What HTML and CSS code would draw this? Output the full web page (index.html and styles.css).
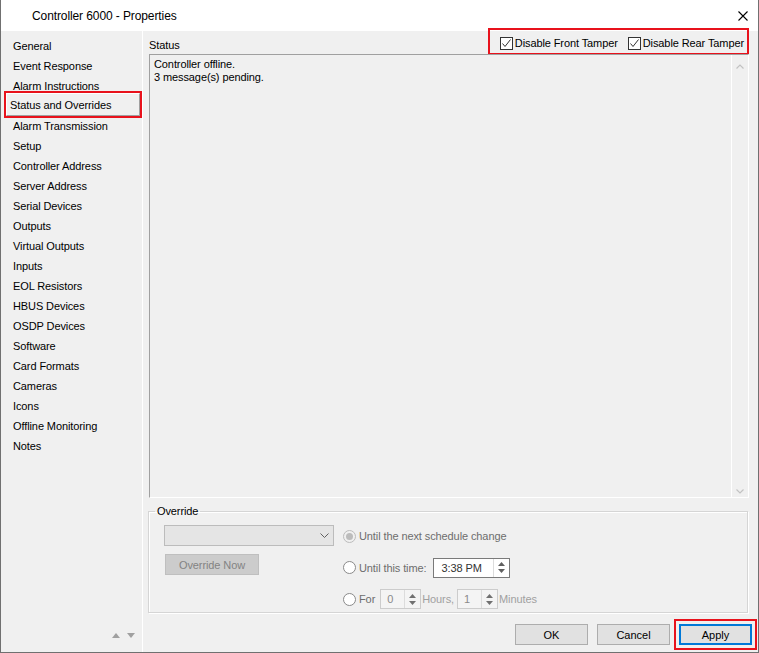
FILE: index.html
```html
<!DOCTYPE html>
<html lang="en">
<head>
    <meta charset="UTF-8">
    <meta name="viewport" content="width=device-width, initial-scale=1.0">
    <title>Controller 6000 - Properties</title>
    <link rel="stylesheet" href="styles.css">
</head>
<body>
    <div class="window">
        <div class="titlebar">
            <span class="title">Controller 6000 - Properties</span>
            <svg class="close" width="10" height="10" viewBox="0 0 10 10">
                <path d="M0.5 0.5L9.5 9.5M9.5 0.5L0.5 9.5" stroke="#000" stroke-width="1.1" fill="none"/>
            </svg>
        </div>
        <div class="content">
            <div class="nav">
                <ul class="nav-list">
                    <li>General</li>
                    <li>Event Response</li>
                    <li>Alarm Instructions</li>
                    <li class="active">Status and Overrides</li>
                    <li>Alarm Transmission</li>
                    <li>Setup</li>
                    <li>Controller Address</li>
                    <li>Server Address</li>
                    <li>Serial Devices</li>
                    <li>Outputs</li>
                    <li>Virtual Outputs</li>
                    <li>Inputs</li>
                    <li>EOL Resistors</li>
                    <li>HBUS Devices</li>
                    <li>OSDP Devices</li>
                    <li>Software</li>
                    <li>Card Formats</li>
                    <li>Cameras</li>
                    <li>Icons</li>
                    <li>Offline Monitoring</li>
                    <li>Notes</li>
                </ul>
                <div class="nav-arrows">
                    <span class="tri-up"></span>
                    <span class="tri-down"></span>
                </div>
            </div>
            <div class="main">
                <div class="status-head">
                    <span class="status-label">Status</span>
                    <div class="tampers">
                        <label class="check">
                            <span class="box"><svg width="11" height="11" viewBox="0 0 11 11"><path d="M1.5 5.5L4 8.5L9.5 1.5" stroke="#333" stroke-width="1" fill="none"/></svg></span>
                            Disable Front Tamper
                        </label>
                        <label class="check">
                            <span class="box"><svg width="11" height="11" viewBox="0 0 11 11"><path d="M1.5 5.5L4 8.5L9.5 1.5" stroke="#333" stroke-width="1" fill="none"/></svg></span>
                            Disable Rear Tamper
                        </label>
                    </div>
                </div>
                <div class="status-box">
                    <div class="status-text">Controller offline.<br>3 message(s) pending.</div>
                    <div class="vscroll">
                        <svg width="8" height="5" viewBox="0 0 8 5"><path d="M0.5 4.5L4 1L7.5 4.5" stroke="#c2c2c2" stroke-width="1.2" fill="none"/></svg>
                        <svg width="8" height="5" viewBox="0 0 8 5"><path d="M0.5 0.5L4 4L7.5 0.5" stroke="#c2c2c2" stroke-width="1.2" fill="none"/></svg>
                    </div>
                </div>
                <fieldset class="override">
                    <legend>Override</legend>
                    <div class="override-body">
                        <div class="override-left">
                            <div class="combo">
                                <svg width="9" height="5" viewBox="0 0 9 5"><path d="M0.5 0.5L4.5 4.5L8.5 0.5" stroke="#606060" stroke-width="1" fill="none"/></svg>
                            </div>
                            <div class="btn-disabled">Override Now</div>
                        </div>
                        <div class="override-right">
                            <div class="opt">
                                <span class="radio radio-on"></span>
                                <span class="opt-label">Until the next schedule change</span>
                            </div>
                            <div class="opt">
                                <span class="radio"></span>
                                <span class="opt-label">Until this time:</span>
                                <div class="spin time">
                                    <span class="val">3:38 PM</span>
                                    <span class="spin-btns">
                                        <svg width="7" height="4" viewBox="0 0 7 4"><path d="M0 4L3.5 0L7 4Z" fill="#606060"/></svg>
                                        <svg width="7" height="4" viewBox="0 0 7 4"><path d="M0 0L3.5 4L7 0Z" fill="#606060"/></svg>
                                    </span>
                                </div>
                            </div>
                            <div class="opt">
                                <span class="radio"></span>
                                <span class="opt-label">For</span>
                                <div class="spin small">
                                    <span class="val">0</span>
                                    <span class="spin-btns">
                                        <svg width="7" height="4" viewBox="0 0 7 4"><path d="M0 4L3.5 0L7 4Z" fill="#707070"/></svg>
                                        <svg width="7" height="4" viewBox="0 0 7 4"><path d="M0 0L3.5 4L7 0Z" fill="#707070"/></svg>
                                    </span>
                                </div>
                                <span class="unit">Hours,</span>
                                <div class="spin small">
                                    <span class="val">1</span>
                                    <span class="spin-btns">
                                        <svg width="7" height="4" viewBox="0 0 7 4"><path d="M0 4L3.5 0L7 4Z" fill="#707070"/></svg>
                                        <svg width="7" height="4" viewBox="0 0 7 4"><path d="M0 0L3.5 4L7 0Z" fill="#707070"/></svg>
                                    </span>
                                </div>
                                <span class="unit">Minutes</span>
                            </div>
                        </div>
                    </div>
                </fieldset>
                <div class="buttons">
                    <button>OK</button>
                    <button>Cancel</button>
                    <button class="default">Apply</button>
                </div>
            </div>
        </div>
    </div>
</body>
</html>
```

FILE: styles.css
```css
*{
    margin: 0;
    padding: 0;
    box-sizing: border-box;
}
body{
    font-family: "Liberation Sans", Arial, sans-serif;
    font-size: 11px;
    letter-spacing: -0.1px;
    color: #000;
    background: #fff;
}
.window{
    width: 759px;
    height: 653px;
    border: 1px solid #707070;
    border-top: none;
    background: #f0f0f0;
    display: flex;
    flex-direction: column;
}
.titlebar{
    height: 31px;
    background: #fff;
    display: flex;
    align-items: center;
    padding: 0 10px 0 31px;
}
.title{
    flex: 1;
    font-size: 12px;
    letter-spacing: -0.1px;
}
.content{
    flex: 1;
    display: flex;
    min-height: 0;
}

/* left navigation */
.nav{
    width: 142px;
    border-right: 1px solid #fff;
    display: flex;
    flex-direction: column;
}
.nav-list{
    list-style: none;
    padding: 5px 0 0 12px;
}
.nav-list li{
    line-height: 20px;
    white-space: nowrap;
}
.nav-list li.active{
    margin: -3px 2px 0 -7px;
    padding: 1px 0 0 3px;
    border: 1px solid;
    border-color: #fff #a0a0a0 #a0a0a0 #fff;
    outline: 2px solid #e8121c;
}
.nav-arrows{
    margin-top: auto;
    display: flex;
    justify-content: flex-end;
    gap: 7px;
    padding: 0 7px 14px 0;
}
.tri-up, .tri-down{
    width: 0;
    height: 0;
    border-left: 4.5px solid transparent;
    border-right: 4.5px solid transparent;
}
.tri-up{
    border-bottom: 5px solid #a0a0a0;
}
.tri-down{
    border-top: 5px solid #a0a0a0;
}

/* right side */
.main{
    flex: 1;
    display: flex;
    flex-direction: column;
    padding: 0 9px 7px 6px;
    min-width: 0;
}
.status-head{
    height: 23px;
    display: flex;
    justify-content: space-between;
    align-items: flex-start;
}
.status-label{
    margin-top: 7px;
    line-height: 14px;
}
.tampers{
    margin: -1px 2px 0 0;
    height: 23px;
    display: flex;
    align-items: flex-start;
    gap: 10px;
    padding: 7px 3px 0 10px;
    outline: 2px solid #e8121c;
}
.check{
    display: flex;
    align-items: center;
    gap: 2px;
    line-height: 13px;
    white-space: nowrap;
}
.check .box{
    width: 13px;
    height: 13px;
    border: 1px solid #333;
    background: #fff;
    display: flex;
}
.status-box{
    flex: 1;
    display: flex;
    border: 1px solid;
    border-color: #a0a0a0 #fff #fff #a0a0a0;
    min-height: 0;
}
.status-text{
    flex: 1;
    padding: 3px 0 0 4px;
    line-height: 13px;
}
.vscroll{
    width: 17px;
    border-left: 1px solid #fff;
    display: flex;
    flex-direction: column;
    justify-content: space-between;
    align-items: center;
    padding: 9px 0 3px;
}

/* override group */
.override{
    margin: 6px 1px 0 -1px;
    border: 1px solid #d5d5d5;
    box-shadow: inset 1px 1px 0 #fff, 1px 1px 0 #fff;
    padding: 7px 0 3px 6px;
}
.override legend{
    padding: 0 2px;
    line-height: 14px;
}
.override-body{
    display: flex;
    gap: 9px;
    padding-left: 9px;
}
.override-left{
    width: 170px;
    display: flex;
    flex-direction: column;
    gap: 8px;
}
.combo{
    height: 21px;
    background: #e5e5e5;
    border: 1px solid #bcbcbc;
    display: flex;
    align-items: center;
    justify-content: flex-end;
    padding-right: 4px;
}
.btn-disabled{
    margin-left: 1px;
    width: 94px;
    height: 21px;
    background: #cccccc;
    border: 1px solid #bfbfbf;
    color: #838383;
    display: flex;
    align-items: center;
    justify-content: center;
}
.override-right{
    margin-top: 1px;
    display: flex;
    flex-direction: column;
    gap: 11.5px;
}
.opt{
    height: 20px;
    display: flex;
    align-items: center;
    white-space: nowrap;
}
.radio{
    width: 13px;
    height: 13px;
    border: 1px solid #8a8a8a;
    border-radius: 50%;
    background: #fff;
    margin-right: 3px;
    display: flex;
    align-items: center;
    justify-content: center;
}
.radio-on{
    border-color: #bcbcbc;
    background: #f0f0f0;
}
.radio-on::after{
    content: "";
    width: 7px;
    height: 7px;
    border-radius: 50%;
    background: #bcbcbc;
}
.opt-label{
    color: #6d6d6d;
}
.unit{
    color: #a0a0a0;
    margin: 0 1px;
}
.spin{
    height: 20px;
    display: flex;
    align-items: stretch;
    border: 1px solid #7a7a7a;
    background: #fff;
}
.spin .val{
    flex: 1;
    display: flex;
    align-items: center;
    padding-left: 7px;
    color: #333;
}
.spin-btns{
    width: 16px;
    border-left: 1px solid #dcdcdc;
    display: flex;
    flex-direction: column;
    align-items: center;
    justify-content: center;
    gap: 3px;
}
.spin.time{
    width: 77px;
    margin-left: 7px;
}
.spin.small{
    width: 41px;
    margin-left: 5px;
    border-color: #cccccc;
    background: #f4f4f4;
}
.unit + .spin.small{
    margin-left: 2px;
}
.spin.small .val{
    padding-left: 6px;
    color: #8a8a8a;
}

/* dialog buttons */
.buttons{
    margin: 11px -3px 0 0;
    display: flex;
    justify-content: flex-end;
    gap: 9px;
}
.buttons button{
    width: 73px;
    height: 21px;
    font: inherit;
    background: #e1e1e1;
    border: 1px solid #adadad;
    color: #000;
}
.buttons .default{
    border: 2px solid #0078d7;
    outline: 2px solid #e8121c;
    outline-offset: 3px;
}
```
